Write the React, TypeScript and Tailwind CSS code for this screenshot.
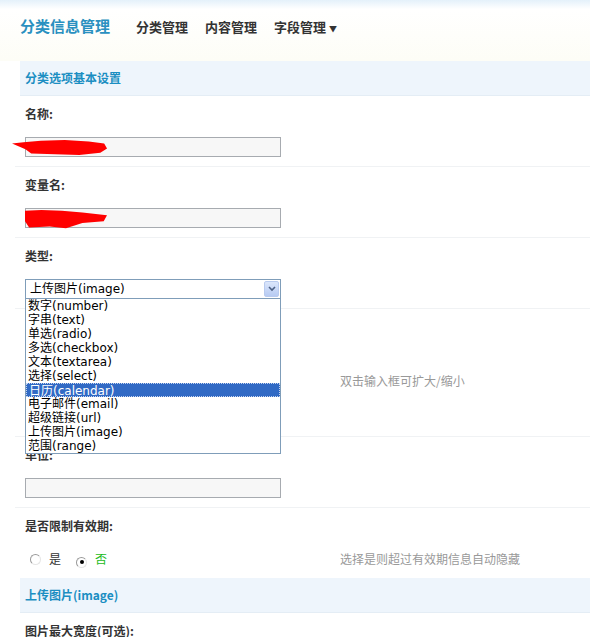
import React from 'react';

const cjk = { fontFamily: '"Noto Sans CJK SC", "Liberation Sans", sans-serif' };
const listFont = { fontFamily: '"DejaVu Sans", "Noto Sans CJK SC", sans-serif' };

const typeOptions = [
  '数字(number)',
  '字串(text)',
  '单选(radio)',
  '多选(checkbox)',
  '文本(textarea)',
  '选择(select)',
  '日历(calendar)',
  '电子邮件(email)',
  '超级链接(url)',
  '上传图片(image)',
  '范围(range)',
];

const Scribble: React.FC<{ d: string; className: string }> = ({ d, className }) => (
  <svg className={`pointer-events-none absolute ${className}`} viewBox="0 0 100 24" preserveAspectRatio="none">
    <path d={d} fill="#ff0000" />
  </svg>
);

const SectionHeader: React.FC<{ title: string }> = ({ title }) => (
  <div className="ml-[20px] flex h-[35px] items-center border-b border-[#e4edf5] bg-[#eef5fc] pl-[5px]">
    <span className="text-[12px] font-bold text-[#1b8ec2]">{title}</span>
  </div>
);

const Row: React.FC<{ label: string; children: React.ReactNode; desc?: string; last?: boolean }> = ({
  label,
  children,
  desc,
  last,
}) => (
  <div className={`ml-[15px] pl-[10px] pt-[10px] pb-[9px] ${last ? '' : 'border-b border-[#f0f2f4]'}`}>
    <div className="h-[16px] text-[12px] font-bold leading-[16px] text-[#333]">{label}</div>
    <div className="mt-[15px] flex items-center">
      <div className="relative w-[256px]">{children}</div>
      {desc && <span className="ml-[59px] text-[12px] text-[#999]">{desc}</span>}
    </div>
  </div>
);

const TextInput: React.FC = () => (
  <div className="h-[20px] w-[256px] border border-[#a7abb0] bg-[#f7f7f7]" />
);

const Radio: React.FC<{ checked?: boolean }> = ({ checked }) => (
  <span className="relative inline-flex h-[11px] w-[11px] items-center justify-center rounded-full border border-[#9a9a9a] border-r-[#e5e5e5] border-b-[#e5e5e5] bg-white">
    {checked && <span className="h-[4px] w-[4px] rounded-full bg-black" />}
  </span>
);

export default function App() {
  return (
    <div className="min-h-[637px] w-full overflow-hidden bg-white text-[#333]" style={cjk}>
      {/* header */}
      <div className="h-[61px] bg-gradient-to-b from-[#e4f1fa] via-white via-[15%] to-[#fdfdf6]">
        <div className="flex items-center pl-[20px] pt-[15px]">
          <span className="text-[15px] font-bold text-[#2a90c0]">分类信息管理</span>
          <nav className="ml-[26px] flex items-center gap-[17px] text-[13px] font-bold text-[#333]">
            <span>分类管理</span>
            <span>内容管理</span>
            <span>
              字段管理<span className="ml-[3px] text-[8px]">▼</span>
            </span>
          </nav>
        </div>
      </div>

      <SectionHeader title="分类选项基本设置" />

      <Row label="名称:">
        <TextInput />
        <Scribble
          className="-left-[13px] top-[3px] h-[17px] w-[96px]"
          d="M0 5 L12 3 L30 1 L55 0 L80 2 L96 5 L99 12 L92 18 L70 21 L45 20 L20 19 L14 13 Z"
        />
      </Row>

      <Row label="变量名:">
        <TextInput />
        <Scribble
          className="left-0 top-[1px] h-[21px] w-[82px]"
          d="M0 2 L20 1 L45 2 L70 4 L100 7 L96 14 L70 16 L50 22 L30 20 L5 21 L0 14 Z"
        />
      </Row>

      <Row label="类型:">
        <div className="relative h-[20px] w-[256px] border border-[#7f9db9] bg-white">
          <span className="absolute left-[4px] top-[1px] text-[12px] leading-[16px] text-black" style={listFont}>
            上传图片(image)
          </span>
          <span className="absolute right-[1px] top-[1px] flex h-[16px] w-[15px] items-center justify-center rounded-[2px] border border-[#b9cbef] bg-gradient-to-b from-[#dbe6fb] to-[#b7cbf3]">
            <svg viewBox="0 0 8 6" className="h-[6px] w-[8px]">
              <path d="M1 1 L4 4 L7 1" stroke="#4d6185" strokeWidth="1.6" fill="none" />
            </svg>
          </span>
          {/* open list */}
          <div className="absolute -left-px top-[18px] z-10 w-[256px] border border-[#7f9db9] bg-white" style={listFont}>
            {typeOptions.map((opt) => (
              <div
                key={opt}
                className={`h-[14px] pl-[2px] text-[12px] leading-[14px] ${
                  opt === '日历(calendar)'
                    ? 'border border-dotted border-[#c6d4ee] bg-[#316ac5] leading-[12px] text-white'
                    : 'text-black'
                }`}
              >
                {opt}
              </div>
            ))}
          </div>
        </div>
      </Row>

      <div className="ml-[15px] flex h-[128px] items-center border-b border-[#f0f2f4] pl-[10px] pt-[16px]">
        <div className="h-[62px] w-[256px] border border-[#a7abb0] bg-[#f7f7f7]" />
        <span className="ml-[59px] text-[12px] text-[#999]">双击输入框可扩大/缩小</span>
      </div>

      <Row label="单位:">
        <TextInput />
      </Row>

      <Row label="是否限制有效期:" desc="选择是则超过有效期信息自动隐藏" last>
        <div className="flex h-[20px] items-center pl-[5px] text-[12px]">
          <Radio />
          <span className="ml-[8px]">是</span>
          <span className="ml-[15px]">
            <Radio checked />
          </span>
          <span className="ml-[8px] text-[#22bb22]">否</span>
        </div>
      </Row>

      <SectionHeader title="上传图片(image)" />

      <div className="ml-[15px] pl-[10px] pt-[10px]">
        <div className="h-[16px] text-[12px] font-bold leading-[16px] text-[#333]">图片最大宽度(可选):</div>
      </div>
    </div>
  );
}
